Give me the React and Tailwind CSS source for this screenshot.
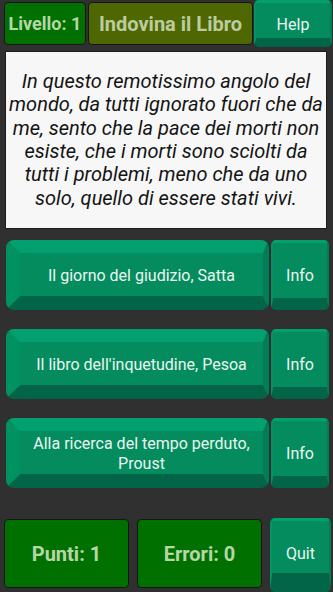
const books = [
  ["Il giorno del giudizio, Satta"],
  ["Il libro dell'inquetudine, Pesoa"],
  ["Alla ricerca del tempo perduto,", "Proust"],
];

function BookRow({ lines }) {
  return (
    <div className="flex h-[70px] ml-[6px]">
      {/* main answer button, bevelled */}
      <button className="w-[263px] h-full rounded-[8px] bg-[#048c5f] border-solid border-t-[13px] border-l-[14px] border-b-[14px] border-r-[6px] border-t-[#02a06f] border-l-[#019262] border-b-[#036547] border-r-[#037d55] pt-[3px] text-[16px] leading-[20px] text-[#eaf6ef] flex flex-col items-center justify-center">
        {lines.map((l) => (
          <span key={l}>{l}</span>
        ))}
      </button>
      <button className="ml-[2px] w-[58px] h-full rounded-[5px] bg-[#048c5f] border-solid border-t-[3px] border-l-[2px] border-r-[2px] border-b-[12px] border-t-[#02a06f] border-l-[#029466] border-r-[#037d55] border-b-[#036547] pt-[11px] text-[16px] text-[#eaf6ef] flex items-center justify-center">
        Info
      </button>
    </div>
  );
}

export default function App() {
  return (
    <div className="w-[333px] h-[592px] overflow-hidden bg-[#303030] flex flex-col font-['Roboto',sans-serif]">
      {/* Header */}
      <div className="flex h-[47px] items-start">
        <div className="ml-[4px] mt-[2px] w-[82px] h-[43px] rounded-[4px] border border-[#161616] bg-[#007000] text-[#b5d7a6] font-bold text-[18px] flex items-center justify-center">
          Livello: 1
        </div>
        <div className="ml-[2px] mt-[2px] w-[165px] h-[43px] rounded-[4px] border border-[#161616] bg-[#4e6700] text-[#bccca1] font-bold text-[20px] flex items-center justify-center">
          Indovina il Libro
        </div>
        <button className="ml-[1px] w-[78px] h-[47px] rounded-[5px] bg-[#048c5f] border-solid border-t-[3px] border-l-[2px] border-r-[2px] border-b-[9px] border-t-[#02a06f] border-l-[#029466] border-r-[#037d55] border-b-[#036547] pt-[8px] text-[16px] text-[#eaf6ef] flex items-center justify-center">
          Help
        </button>
      </div>

      {/* Quote */}
      <div className="ml-[5px] mt-[4px] w-[322px] h-[180px] border border-[#1c1c1c] bg-[#f7f7f7] flex items-center justify-center px-[2px]">
        <p className="italic text-[20px] leading-[23.4px] text-[#141414] text-center">
          In questo remotissimo angolo del mondo, da tutti ignorato fuori che da me, sento che la pace dei morti non esiste, che i morti sono sciolti da tutti i problemi, meno che da uno solo, quello di essere stati vivi.
        </p>
      </div>

      {/* Answers */}
      <div className="mt-[11px] flex flex-col gap-[19px]">
        {books.map((b) => (
          <BookRow key={b[0]} lines={b} />
        ))}
      </div>

      {/* Footer */}
      <div className="mt-[30px] flex items-start">
        <div className="ml-[4px] mt-[1px] w-[125px] h-[69px] rounded-[4px] border border-[#161616] bg-[#007000] text-[#b5d7a6] font-bold text-[20px] flex items-center justify-center">
          Punti: 1
        </div>
        <div className="ml-[8px] mt-[1px] w-[125px] h-[69px] rounded-[4px] border border-[#161616] bg-[#007000] text-[#b5d7a6] font-bold text-[20px] flex items-center justify-center">
          Errori: 0
        </div>
        <button className="ml-[8px] w-[61px] h-[74px] rounded-[5px] bg-[#048c5f] border-solid border-t-[3px] border-l-[2px] border-r-[2px] border-b-[19px] border-t-[#02a06f] border-l-[#029466] border-r-[#037d55] border-b-[#036547] text-[16px] text-[#eaf6ef] flex items-center justify-center pt-[14px]">
          Quit
        </button>
      </div>
    </div>
  );
}
